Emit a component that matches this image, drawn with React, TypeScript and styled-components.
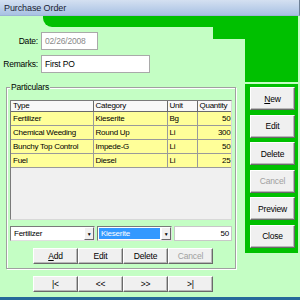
import styled, { createGlobalStyle } from 'styled-components';

const GlobalStyle = createGlobalStyle`
  html, body {
    margin: 0;
    padding: 0;
  }
  body {
    font-family: "Liberation Sans", Arial, sans-serif;
  }
`;

const GREEN = '#00c000';
const PALE = '#c4fec4';

const Window = styled.div`
  width: 300px;
  height: 300px;
  box-sizing: border-box;
  background: ${PALE};
  border-bottom: 3px solid #26699a;
  display: flex;
  flex-direction: column;
  overflow: hidden;
  font-size: 8px;
  letter-spacing: -0.25px;
  color: #000;
`;

const TitleBar = styled.div`
  height: 16px;
  box-sizing: border-box;
  flex-shrink: 0;
  padding-left: 4px;
  display: flex;
  align-items: center;
  font-size: 9px;
  letter-spacing: -0.1px;
  color: #1a2233;
  background: linear-gradient(#d4e0f1, #a8c1e3);
  border-bottom: 1px solid #9cb4d6;
  border-right: 1px solid #6d7f96;
`;

const Main = styled.div`
  flex: 1;
  display: grid;
  grid-template-columns: 245px 53px;
`;

const LeftColumn = styled.div`
  display: flex;
  flex-direction: column;
`;

const GreenBar = styled.div`
  position: relative;
  margin-left: 43px;
  height: 11px;
  background: ${GREEN};
  border-bottom-left-radius: 9px;
  &::after {
    content: '';
    position: absolute;
    right: 0;
    top: 11px;
    width: 32px;
    height: 12px;
    background: ${GREEN};
  }
`;

const FormRow = styled.div`
  display: flex;
  align-items: center;
  height: 18px;
  margin-top: 5px;
`;

const Label = styled.label`
  width: 38px;
  margin-right: 3px;
  text-align: right;
  font-size: 8.5px;
  letter-spacing: -0.2px;
`;

const TextField = styled.div<{ $width: number; $muted?: boolean }>`
  width: ${(p) => p.$width}px;
  height: 18px;
  box-sizing: border-box;
  background: #fff;
  border: 1px solid #a9a9a9;
  padding-left: 3px;
  display: flex;
  align-items: center;
  font-size: 8.5px;
  letter-spacing: -0.2px;
  color: ${(p) => (p.$muted ? '#8a8a8a' : '#000')};
`;

const GroupBox = styled.div`
  position: relative;
  margin: 14px 0 0 6px;
  width: 230px;
  height: 182px;
  box-sizing: border-box;
  border: 1px solid #a0a0a0;
  box-shadow: inset 1px 1px 0 #fff, 1px 1px 0 #fff;
  padding: 12px 3px 0 3px;
  display: flex;
  flex-direction: column;
`;

const Legend = styled.span`
  position: absolute;
  top: -6px;
  left: 3px;
  padding: 0 1px;
  line-height: 11px;
  font-size: 8.5px;
  letter-spacing: -0.2px;
  background: ${PALE};
`;

const GridFrame = styled.div`
  width: 222px;
  height: 120px;
  box-sizing: border-box;
  background: #f0f0f0;
  border: 1px solid;
  border-color: #7a7a7a #d8d8d8 #d8d8d8 #7a7a7a;
  overflow: hidden;
`;

const Table = styled.table`
  border-collapse: collapse;
  table-layout: fixed;
  width: 221px;
`;

const Col = styled.col<{ $width: number }>`
  width: ${(p) => p.$width}px;
`;

const HeadCell = styled.th`
  height: 10px;
  padding: 0 0 0 2px;
  text-align: left;
  font-weight: normal;
  line-height: 10px;
  background: #f8f8f8;
  border-right: 1px solid #6a6a6a;
  border-bottom: 1px solid #6a6a6a;
  white-space: nowrap;
  overflow: hidden;
`;

const Cell = styled.td<{ $right?: boolean }>`
  height: 13px;
  padding: 0 1px 0 2px;
  line-height: 13px;
  background: #ffff99;
  border-right: 1px solid #9a9a9a;
  border-bottom: 1px solid #9a9a9a;
  text-align: ${(p) => (p.$right ? 'right' : 'left')};
  white-space: nowrap;
  overflow: hidden;
`;

const EditRow = styled.div`
  display: flex;
  height: 15px;
  margin-top: 6px;
`;

const Combo = styled.div<{ $width: number }>`
  width: ${(p) => p.$width}px;
  height: 15px;
  box-sizing: border-box;
  background: #fff;
  border: 1px solid;
  border-color: #7a7a7a #e0e0e0 #e0e0e0 #7a7a7a;
  display: flex;
  margin-right: 2px;
`;

const ComboText = styled.div<{ $selected?: boolean }>`
  flex: 1;
  margin: 1px;
  padding-left: 2px;
  display: flex;
  align-items: center;
  background: ${(p) => (p.$selected ? '#3399ff' : 'transparent')};
  color: ${(p) => (p.$selected ? '#fff' : '#000')};
`;

const DropButton = styled.div`
  width: 10px;
  box-sizing: border-box;
  background: #f0f0f0;
  border: 1px solid;
  border-color: #fff #6a6a6a #6a6a6a #fff;
  display: flex;
  align-items: center;
  justify-content: center;
  font-size: 5px;
`;

const QtyField = styled.div`
  width: 58px;
  height: 15px;
  box-sizing: border-box;
  background: #fff;
  border: 1px solid #c8c8c8;
  padding-right: 2px;
  display: flex;
  align-items: center;
  justify-content: flex-end;
`;

const ButtonRow = styled.div<{ $top: number }>`
  display: flex;
  padding-left: 23px;
  margin-top: ${(p) => p.$top}px;
`;

const Button = styled.button<{ $disabled?: boolean }>`
  width: 45px;
  height: 16px;
  padding: 0;
  box-sizing: border-box;
  font-family: inherit;
  font-size: 8.5px;
  letter-spacing: -0.2px;
  background: #f0f0f0;
  color: ${(p) => (p.$disabled ? '#a0a0a0' : '#000')};
  border: 1px solid;
  border-color: #fff #6a6a6a #6a6a6a #fff;
  box-shadow: inset -1px -1px 0 #b8b8b8;
  u {
    text-decoration: underline;
  }
`;

const NavRow = styled(ButtonRow)`
  padding-left: 33px;
`;

const RightColumn = styled.div`
  display: flex;
  flex-direction: column;
`;

const GreenBlock = styled.div`
  height: 66px;
  background: ${GREEN};
`;

const SidePanel = styled.div`
  margin-top: 2px;
  height: 169px;
  box-sizing: border-box;
  background: ${GREEN};
  padding: 3px 3px 5px 5px;
  display: flex;
  flex-direction: column;
  justify-content: space-between;
`;

const SideButton = styled(Button)`
  height: 23px;
`;

const rows = [
  ['Fertilizer', 'Kieserite', 'Bg', '50'],
  ['Chemical Weeding', 'Round Up', 'Li', '300'],
  ['Bunchy Top Control', 'Impede-G', 'Li', '50'],
  ['Fuel', 'Diesel', 'Li', '25'],
];

export default function App() {
  return (
    <>
      <GlobalStyle />
      <Window>
        <TitleBar>Purchase Order</TitleBar>
        <Main>
          <LeftColumn>
            <GreenBar />
            <FormRow>
              <Label>Date:</Label>
              <TextField $width={57} $muted>
                02/26/2008
              </TextField>
            </FormRow>
            <FormRow>
              <Label>Remarks:</Label>
              <TextField $width={109}>First PO</TextField>
            </FormRow>
            <GroupBox>
              <Legend>Particulars</Legend>
              <GridFrame>
                <Table>
                  <colgroup>
                    <Col $width={82} />
                    <Col $width={74} />
                    <Col $width={30} />
                    <Col $width={35} />
                  </colgroup>
                  <thead>
                    <tr>
                      <HeadCell>Type</HeadCell>
                      <HeadCell>Category</HeadCell>
                      <HeadCell>Unit</HeadCell>
                      <HeadCell>Quantity</HeadCell>
                    </tr>
                  </thead>
                  <tbody>
                    {rows.map((r) => (
                      <tr key={r[0]}>
                        <Cell>{r[0]}</Cell>
                        <Cell>{r[1]}</Cell>
                        <Cell>{r[2]}</Cell>
                        <Cell $right>{r[3]}</Cell>
                      </tr>
                    ))}
                  </tbody>
                </Table>
              </GridFrame>
              <EditRow>
                <Combo $width={85}>
                  <ComboText>Fertilizer</ComboText>
                  <DropButton>▼</DropButton>
                </Combo>
                <Combo $width={75}>
                  <ComboText $selected>Kieserite</ComboText>
                  <DropButton>▼</DropButton>
                </Combo>
                <QtyField>50</QtyField>
              </EditRow>
              <ButtonRow $top={7}>
                <Button>
                  <u>A</u>dd
                </Button>
                <Button>Edit</Button>
                <Button>Delete</Button>
                <Button $disabled>Cancel</Button>
              </ButtonRow>
            </GroupBox>
            <NavRow $top={7}>
              <Button>|&lt;</Button>
              <Button>&lt;&lt;</Button>
              <Button>&gt;&gt;</Button>
              <Button>&gt;|</Button>
            </NavRow>
          </LeftColumn>
          <RightColumn>
            <GreenBlock />
            <SidePanel>
              <SideButton>
                <u>N</u>ew
              </SideButton>
              <SideButton>Edit</SideButton>
              <SideButton>Delete</SideButton>
              <SideButton $disabled>Cancel</SideButton>
              <SideButton>Preview</SideButton>
              <SideButton>Close</SideButton>
            </SidePanel>
          </RightColumn>
        </Main>
      </Window>
    </>
  );
}
